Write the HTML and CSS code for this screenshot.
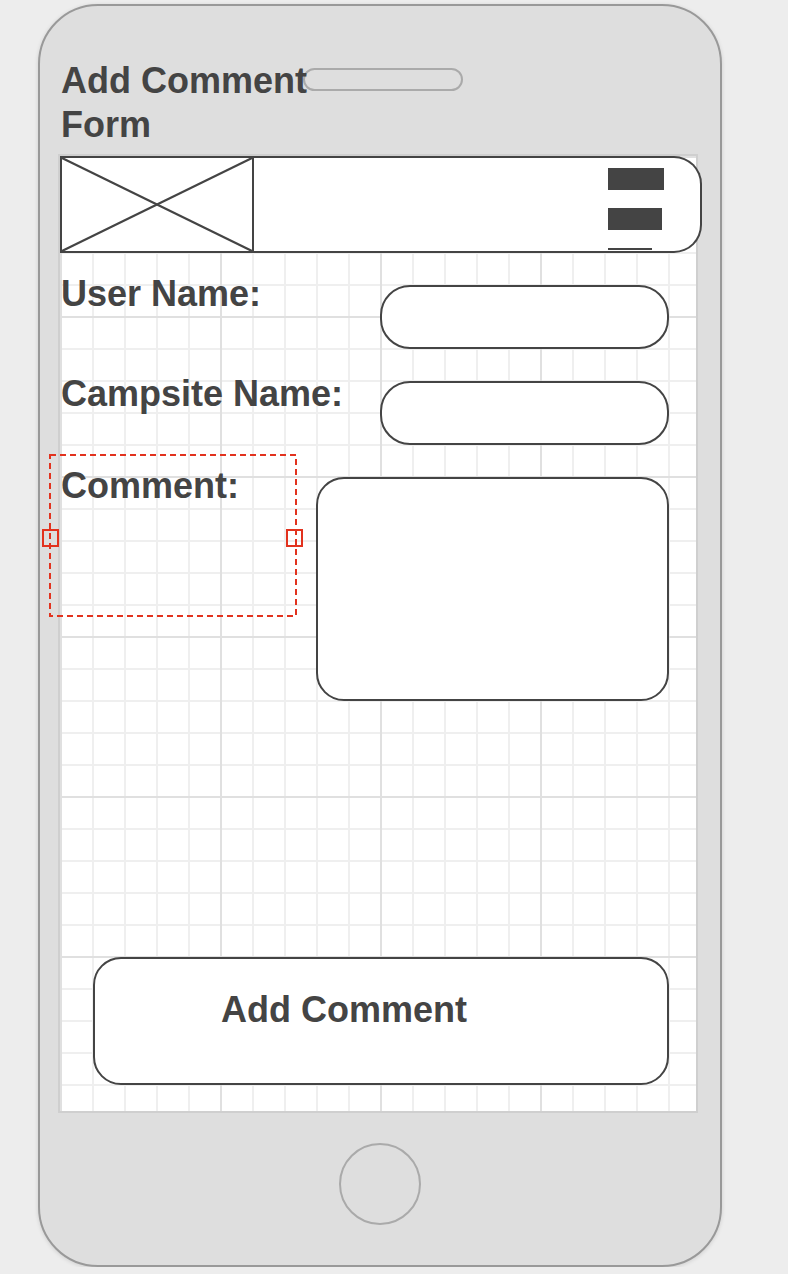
FILE: index.html
```html
<!DOCTYPE html>
<html lang="en">

<head>
  <meta charset="UTF-8">
  <title>Add Comment Form</title>
  <link rel="stylesheet" href="styles.css">
</head>

<body>
  <div class="phone">
    <span class="speaker"></span>
    <h1 class="title">Add Comment Form</h1>

    <div class="screen">
      <header class="app-bar">
        <div class="logo-box">
          <svg viewBox="0 0 100 100" preserveAspectRatio="none">
            <line x1="0" y1="0" x2="100" y2="100" />
            <line x1="0" y1="100" x2="100" y2="0" />
          </svg>
        </div>
        <div class="menu">
          <span class="menu-bar"></span>
          <span class="menu-bar short"></span>
          <span class="menu-line"></span>
        </div>
      </header>

      <form class="comment-form" onsubmit="event.preventDefault()">
        <div class="row row-user">
          <label for="user">User Name:</label>
          <input type="text" id="user" name="user">
        </div>

        <div class="row row-camp">
          <label for="camp">Campsite Name:</label>
          <input type="text" id="camp" name="camp">
        </div>

        <div class="row row-comment">
          <label for="comment" class="selected">
            Comment:
            <svg class="selection" viewBox="0 0 248 163">
              <rect x="1" y="1" width="246" height="161" />
            </svg>
            <span class="handle handle-left"></span>
            <span class="handle handle-right"></span>
          </label>
          <textarea id="comment" name="comment"></textarea>
        </div>

        <button type="submit">Add Comment</button>
      </form>
    </div>

    <div class="home-button"></div>
  </div>
</body>

</html>
```

FILE: styles.css
```css
body {
  margin: 0;
  background: #ededed;
  font-family: 'Liberation Sans', Arial, Helvetica, sans-serif;
  color: #444;
}

.phone {
  position: relative;
  box-sizing: border-box;
  width: 684px;
  height: 1263px;
  margin: 4px 0 0 38px;
  padding-top: 53px;
  background: #dedede;
  border: 2px solid #999;
  border-radius: 60px;
  box-shadow: 0 1px 4px 0 #0002;
  display: flex;
  flex-direction: column;
}

.speaker {
  position: absolute;
  left: 263px;
  top: 62px;
  width: 160px;
  height: 23px;
  box-sizing: border-box;
  border: 2px solid #aaa;
  border-radius: 12px;
}

.title {
  position: relative;
  width: 270px;
  margin: 0 0 0 21px;
  font-size: 36px;
  line-height: 44px;
  font-weight: bold;
}

.screen {
  box-sizing: border-box;
  width: 640px;
  height: 959px;
  margin: 7px 0 0 18px;
  border: 2px solid #cfcfcf;
  background-color: #fff;
  background-image:
    linear-gradient(to right, #e0e0e0 2px, transparent 2px),
    linear-gradient(to bottom, #e0e0e0 2px, transparent 2px),
    linear-gradient(to right, #efefef 2px, transparent 2px),
    linear-gradient(to bottom, #efefef 2px, transparent 2px);
  background-size: 160px 160px, 160px 160px, 32px 32px, 32px 32px;
}

/* top bar with logo placeholder + menu */
.app-bar {
  box-sizing: border-box;
  display: flex;
  justify-content: space-between;
  width: 642px;
  height: 97px;
  background: #fff;
  border: 2px solid #444;
  border-left: none;
  border-radius: 0 28px 28px 0;
}

.logo-box {
  box-sizing: border-box;
  width: 194px;
  height: 97px;
  margin: -2px 0;
  border: 2px solid #444;
}

.logo-box svg {
  display: block;
  width: 100%;
  height: 100%;
}

.logo-box line {
  stroke: #444;
  stroke-width: 2.2;
  vector-effect: non-scaling-stroke;
}

.menu {
  display: flex;
  flex-direction: column;
  gap: 18px;
  padding-top: 10px;
  margin-right: 36px;
}

.menu-bar {
  width: 56px;
  height: 22px;
  background: #444;
}

.menu-bar.short {
  width: 54px;
}

.menu-line {
  width: 44px;
  height: 2px;
  background: #444;
}

/* form */
.comment-form {
  display: flex;
  flex-direction: column;
}

.row {
  display: flex;
  justify-content: space-between;
  align-items: flex-start;
  padding-right: 27px;
}

.row label {
  padding-left: 1px;
  font-size: 36px;
  line-height: 40px;
  font-weight: bold;
}

.row input,
.row textarea {
  box-sizing: border-box;
  border: 2px solid #444;
  background: #fff;
  font: inherit;
  outline: none;
  resize: none;
}

.row input {
  width: 289px;
  height: 64px;
  border-radius: 30px;
}

.row-user {
  margin-top: 21px;
}

.row-user input {
  margin-top: 11px;
}

.row-camp {
  margin-top: 25px;
}

.row-camp input {
  margin-top: 7px;
}

.row-comment {
  margin-top: 21px;
}

.row-comment textarea {
  width: 353px;
  height: 224px;
  margin-top: 11px;
  border-radius: 28px;
}

.selected {
  position: relative;
}

.selection {
  position: absolute;
  left: -11px;
  top: -12px;
  width: 248px;
  height: 163px;
  overflow: visible;
}

.selection rect {
  fill: none;
  stroke: #e2321e;
  stroke-width: 2;
  stroke-dasharray: 6 4;
}

.handle {
  position: absolute;
  top: 63px;
  width: 17px;
  height: 18px;
  box-sizing: border-box;
  border: 2px solid #e2321e;
}

.handle-left {
  left: -18px;
}

.handle-right {
  left: 226px;
}

button {
  box-sizing: border-box;
  width: 576px;
  margin: 256px 0 0 33px;
  padding: 31px 0 53px 126px;
  background: #fff;
  border: 2px solid #444;
  border-radius: 28px;
  color: #444;
  font: bold 36px/40px 'Liberation Sans', Arial, Helvetica, sans-serif;
  text-align: left;
}

.home-button {
  box-sizing: border-box;
  width: 82px;
  height: 82px;
  margin: 30px auto 0;
  border: 2px solid #aaa;
  border-radius: 50%;
}
```
